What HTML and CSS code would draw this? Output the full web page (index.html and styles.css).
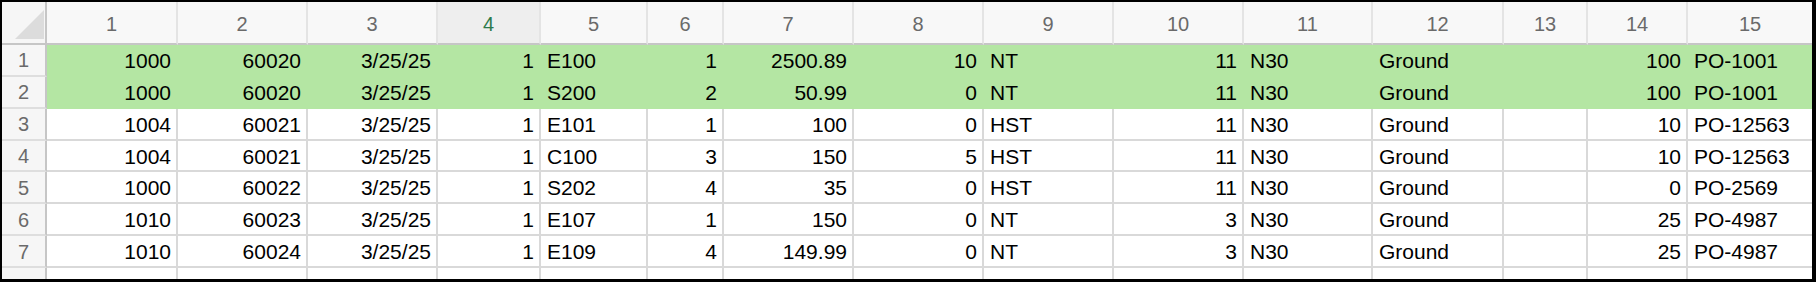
FILE: index.html
```html
<!DOCTYPE html>
<html>
<head>
<meta charset="utf-8">
<link rel="stylesheet" href="styles.css">
</head>
<body>
<div class="frame">
<div class="sheet">
  <div class="corner"><svg class="tri" width="29" height="29" viewBox="0 0 29 29"><polygon points="0,29 29,0 29,29" fill="#dcdcdc"/></svg></div>
  <div class="ch">1</div><div class="ch">2</div><div class="ch">3</div><div class="ch sel">4</div><div class="ch">5</div><div class="ch">6</div><div class="ch">7</div><div class="ch">8</div><div class="ch">9</div><div class="ch">10</div><div class="ch">11</div><div class="ch">12</div><div class="ch">13</div><div class="ch">14</div><div class="ch last">15</div>

  <div class="rh">1</div>
  <div class="c n g">1000</div><div class="c n g">60020</div><div class="c n g">3/25/25</div><div class="c n g">1</div><div class="c t g">E100</div><div class="c n g">1</div><div class="c n g">2500.89</div><div class="c n g">10</div><div class="c t g">NT</div><div class="c n g">11</div><div class="c t g">N30</div><div class="c t g">Ground</div><div class="c g"></div><div class="c n g">100</div><div class="c t g last">PO-1001</div>

  <div class="rh">2</div>
  <div class="c n g">1000</div><div class="c n g">60020</div><div class="c n g">3/25/25</div><div class="c n g">1</div><div class="c t g">S200</div><div class="c n g">2</div><div class="c n g">50.99</div><div class="c n g">0</div><div class="c t g">NT</div><div class="c n g">11</div><div class="c t g">N30</div><div class="c t g">Ground</div><div class="c g"></div><div class="c n g">100</div><div class="c t g last">PO-1001</div>

  <div class="rh">3</div>
  <div class="c n">1004</div><div class="c n">60021</div><div class="c n">3/25/25</div><div class="c n">1</div><div class="c t">E101</div><div class="c n">1</div><div class="c n">100</div><div class="c n">0</div><div class="c t">HST</div><div class="c n">11</div><div class="c t">N30</div><div class="c t">Ground</div><div class="c"></div><div class="c n">10</div><div class="c t last">PO-12563</div>

  <div class="rh">4</div>
  <div class="c n">1004</div><div class="c n">60021</div><div class="c n">3/25/25</div><div class="c n">1</div><div class="c t">C100</div><div class="c n">3</div><div class="c n">150</div><div class="c n">5</div><div class="c t">HST</div><div class="c n">11</div><div class="c t">N30</div><div class="c t">Ground</div><div class="c"></div><div class="c n">10</div><div class="c t last">PO-12563</div>

  <div class="rh">5</div>
  <div class="c n">1000</div><div class="c n">60022</div><div class="c n">3/25/25</div><div class="c n">1</div><div class="c t">S202</div><div class="c n">4</div><div class="c n">35</div><div class="c n">0</div><div class="c t">HST</div><div class="c n">11</div><div class="c t">N30</div><div class="c t">Ground</div><div class="c"></div><div class="c n">0</div><div class="c t last">PO-2569</div>

  <div class="rh">6</div>
  <div class="c n">1010</div><div class="c n">60023</div><div class="c n">3/25/25</div><div class="c n">1</div><div class="c t">E107</div><div class="c n">1</div><div class="c n">150</div><div class="c n">0</div><div class="c t">NT</div><div class="c n">3</div><div class="c t">N30</div><div class="c t">Ground</div><div class="c"></div><div class="c n">25</div><div class="c t last">PO-4987</div>

  <div class="rh">7</div>
  <div class="c n">1010</div><div class="c n">60024</div><div class="c n">3/25/25</div><div class="c n">1</div><div class="c t">E109</div><div class="c n">4</div><div class="c n">149.99</div><div class="c n">0</div><div class="c t">NT</div><div class="c n">3</div><div class="c t">N30</div><div class="c t">Ground</div><div class="c"></div><div class="c n">25</div><div class="c t last">PO-4987</div>

  <div class="rh end">8</div>
  <div class="c end"></div><div class="c end"></div><div class="c end"></div><div class="c end"></div><div class="c end"></div><div class="c end"></div><div class="c end"></div><div class="c end"></div><div class="c end"></div><div class="c end"></div><div class="c end"></div><div class="c end"></div><div class="c end"></div><div class="c end"></div><div class="c end last"></div>
</div>
</div>
</body>
</html>
```

FILE: styles.css
```css
html, body {
  margin: 0;
  padding: 0;
  background: #000;
}
.frame {
  width: 1816px;
  height: 282px;
  box-sizing: border-box;
  border-style: solid;
  border-color: #000;
  border-width: 2px 4px 3px 2px;
  background: #fff;
  overflow: hidden;
}
.sheet {
  display: grid;
  grid-template-columns: 45px 131px 130px 130px 103px 107px 76px 130px 130px 130px 130px 129px 131px 84px 100px 124px;
  grid-template-rows: 43px repeat(7, 31.86px) 1fr;
  height: 100%;
  font-family: "Liberation Sans", Arial, sans-serif;
}
.sheet > div {
  box-sizing: border-box;
  overflow: hidden;
  white-space: nowrap;
}
.corner {
  background: #f6f6f6;
  border-right: 2px solid #c6c6c6;
  border-bottom: 2px solid #c6c6c6;
  display: flex;
  align-items: flex-end;
  justify-content: flex-end;
  padding: 0 1px 4px 0;
}
.tri {
  display: block;
}
.ch {
  background: #f8f8f8;
  border-right: 2px solid #e4e4e4;
  border-bottom: 2px solid #c6c6c6;
  color: #6a6a6a;
  font-size: 20px;
  display: flex;
  align-items: center;
  justify-content: center;
  padding-top: 4px;
}
.ch.sel {
  background: #eeeeee;
  color: #2d7a4c;
}
.rh {
  background: #f6f6f6;
  border-right: 2px solid #c6c6c6;
  border-bottom: 2px solid #dedede;
  color: #6a6a6a;
  font-size: 20px;
  display: flex;
  align-items: center;
  justify-content: center;
  padding-top: 2px;
}
.rh.end {
  align-items: flex-start;
  padding-top: 8px;
  border-bottom: 0;
}
.c {
  border-right: 2px solid #d9d9d9;
  border-bottom: 2px solid #d9d9d9;
  color: #000;
  font-size: 21px;
  display: flex;
  align-items: center;
  padding-top: 2px;
}
.c.end {
  border-bottom: 0;
}
.c.last, .ch.last {
  border-right: 0;
}
.n {
  justify-content: flex-end;
  padding-right: 5px;
}
.t {
  justify-content: flex-start;
  padding-left: 6px;
}
.g {
  background: #b4e6a3;
  border-color: #b4e6a3;
}
```
